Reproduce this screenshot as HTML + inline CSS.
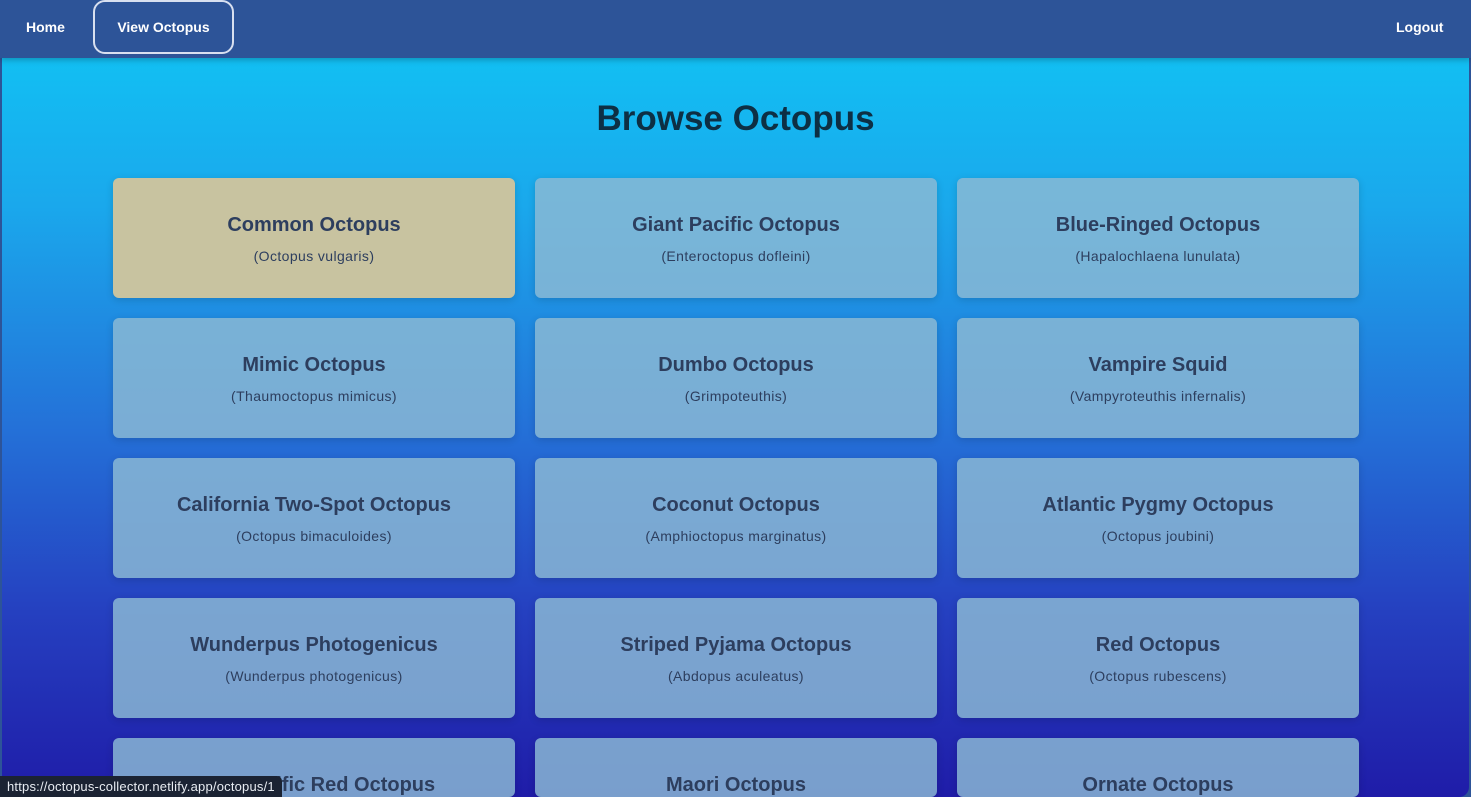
<!DOCTYPE html>
<html><head><style>
*{margin:0;padding:0;box-sizing:border-box}
html,body{width:1471px;height:797px;overflow:hidden}
body{font-family:"Liberation Sans",sans-serif;background:#2d5498;position:relative}
nav{position:absolute;left:0;top:0;width:1471px;height:58px;background:#2d5498;box-shadow:0 2px 6px rgba(0,0,0,.25);z-index:2}
nav a{position:absolute;color:#fff;font-weight:bold;font-size:14px;text-decoration:none;top:19px}
.vo{left:93px;top:0 !important;width:141px;height:54px;border:2px solid #d8e0f0;border-radius:12px;text-align:center;line-height:50px}
main{position:absolute;left:2px;top:58px;width:1467px;height:739px;background:linear-gradient(#12bff3 0%,#1aa8ec 20%,#2471d8 50%,#2540c0 75%,#1f1ca8 100%);border-radius:0 0 10px 10px;overflow:hidden}
h1{position:absolute;top:41px;width:100%;text-align:center;font-size:35px;color:#0d2f44;font-weight:bold}
.c{position:absolute;width:402px;height:120px;border-radius:6px;background:rgba(140,185,212,.83);box-shadow:0 2px 8px rgba(0,0,0,.15);text-align:center;color:#2d3e5e;overflow:hidden}
.c h2{font-size:20px;font-weight:bold;margin-top:36px}
.c p{font-size:14px;margin-top:11px;letter-spacing:.4px}
.st{position:absolute;left:0;bottom:0;background:#1b2333;color:#e8ecf2;font-size:13px;padding:3px 7px 3px;border-radius:0 5px 0 0;z-index:3;letter-spacing:.2px}
</style></head><body>
<nav><a style="left:26px">Home</a><a class="vo">View Octopus</a><a style="left:1396px">Logout</a></nav>
<main>
<h1>Browse Octopus</h1>
<div class="c" style="left:111px;top:120px;background:#c8c3a0"><h2>Common Octopus</h2><p>(Octopus vulgaris)</p></div>
<div class="c" style="left:533px;top:120px"><h2>Giant Pacific Octopus</h2><p>(Enteroctopus dofleini)</p></div>
<div class="c" style="left:955px;top:120px"><h2>Blue-Ringed Octopus</h2><p>(Hapalochlaena lunulata)</p></div>
<div class="c" style="left:111px;top:260px"><h2>Mimic Octopus</h2><p>(Thaumoctopus mimicus)</p></div>
<div class="c" style="left:533px;top:260px"><h2>Dumbo Octopus</h2><p>(Grimpoteuthis)</p></div>
<div class="c" style="left:955px;top:260px"><h2>Vampire Squid</h2><p>(Vampyroteuthis infernalis)</p></div>
<div class="c" style="left:111px;top:400px"><h2>California Two-Spot Octopus</h2><p>(Octopus bimaculoides)</p></div>
<div class="c" style="left:533px;top:400px"><h2>Coconut Octopus</h2><p>(Amphioctopus marginatus)</p></div>
<div class="c" style="left:955px;top:400px"><h2>Atlantic Pygmy Octopus</h2><p>(Octopus joubini)</p></div>
<div class="c" style="left:111px;top:540px"><h2>Wunderpus Photogenicus</h2><p>(Wunderpus photogenicus)</p></div>
<div class="c" style="left:533px;top:540px"><h2>Striped Pyjama Octopus</h2><p>(Abdopus aculeatus)</p></div>
<div class="c" style="left:955px;top:540px"><h2>Red Octopus</h2><p>(Octopus rubescens)</p></div>
<div class="c" style="left:111px;top:680px;height:59px"><h2>East Pacific Red Octopus</h2></div>
<div class="c" style="left:533px;top:680px;height:59px"><h2>Maori Octopus</h2></div>
<div class="c" style="left:955px;top:680px;height:59px"><h2>Ornate Octopus</h2></div>
</main>
<div class="st">https://octopus-collector.netlify.app/octopus/1</div>
</body></html>
